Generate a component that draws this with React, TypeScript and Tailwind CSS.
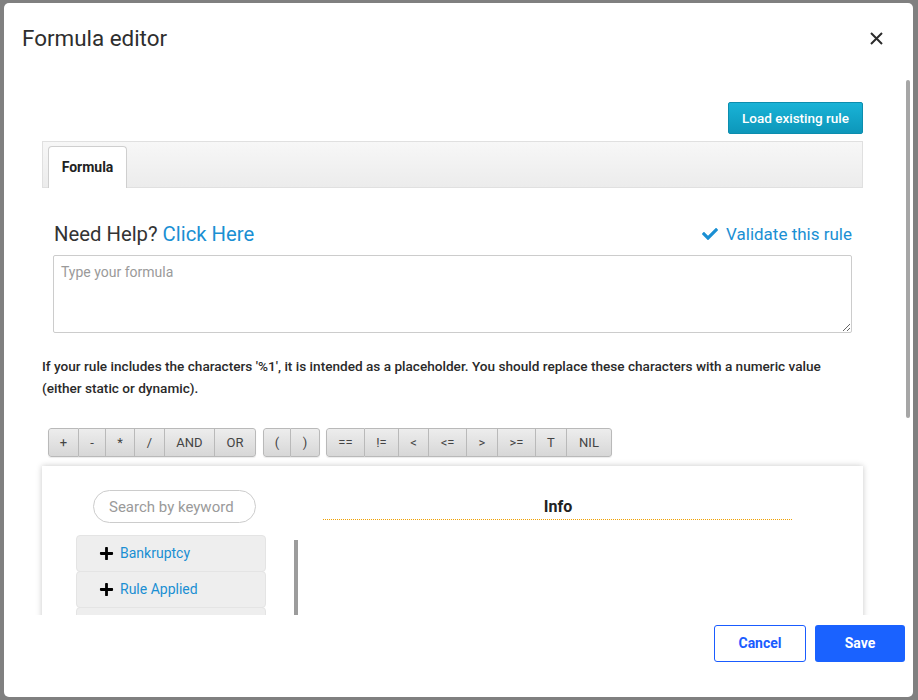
import React from "react";
import { FaCheck, FaPlus } from "react-icons/fa";

type Op = { label: string; w: number };

const groups: Op[][] = [
  [
    { label: "+", w: 31 },
    { label: "-", w: 27 },
    { label: "*", w: 29 },
    { label: "/", w: 30 },
    { label: "AND", w: 50 },
    { label: "OR", w: 41 },
  ],
  [
    { label: "(", w: 28 },
    { label: ")", w: 29 },
  ],
  [
    { label: "==", w: 39 },
    { label: "!=", w: 34 },
    { label: "<", w: 30 },
    { label: "<=", w: 38 },
    { label: ">", w: 31 },
    { label: ">=", w: 38 },
    { label: "T", w: 31 },
    { label: "NIL", w: 45 },
  ],
];

function OpGroup({ ops }: { ops: Op[] }) {
  return (
    <div className="flex h-[29px] rounded-[3px] overflow-hidden shadow-[0_1px_1px_rgba(0,0,0,0.08)]">
      {ops.map((o, i) => (
        <div
          key={i}
          style={{ width: o.w }}
          className="flex items-center justify-center bg-gradient-to-b from-[#ededed] to-[#d7d7d7] text-[13px] text-[#444] shrink-0 border-y border-r border-[#b9b9b9] first:border-l first:rounded-l-[3px] last:rounded-r-[3px]"
        >
          {o.label}
        </div>
      ))}
    </div>
  );
}

function ListItem({ label }: { label: string }) {
  return (
    <div className="h-[37px] w-[190px] -mt-px first:mt-0 bg-[#eeeeee] border border-[#e4e4e4] rounded-[4px] flex items-center pl-[22px]">
      <FaPlus size={15} className="text-black" />
      <span className="ml-[6px] text-[14px] text-[#1a8fd3]">{label}</span>
    </div>
  );
}

export default function App() {
  return (
    <div className="w-[918px] h-[700px] bg-[#808080] pt-[3px] pl-[4px] overflow-hidden font-['Roboto',sans-serif]">
      <div className="w-[909px] h-[694px] bg-white rounded-[5px] flex flex-col overflow-hidden">
        {/* Header */}
        <div className="h-[77px] shrink-0 flex justify-between">
          <h1 className="pl-[18px] pt-[22px] text-[22.4px] leading-[26px] text-[#2e2e2e] font-normal">
            Formula editor
          </h1>
          <div className="pt-[29px] pr-[30px]">
            <svg width="13" height="13" viewBox="0 0 13 13">
              <path d="M1 1 L12 12 M12 1 L1 12" stroke="#2b2b2b" strokeWidth="2" />
            </svg>
          </div>
        </div>

        {/* Body */}
        <div className="relative h-[535px] shrink-0 overflow-hidden pl-[38px]">
          <div className="absolute right-[3px] top-0 w-[4px] h-[338px] rounded-[2px] bg-[#a6a6a6]" />
          <div className="w-[821px] pt-[22px]">
            <div className="flex justify-end">
              <button className="w-[135px] h-[32px] rounded-[2px] bg-gradient-to-b from-[#19b3d7] to-[#0d97ba] border border-[#0c8dae] text-white text-[13.5px] font-medium">
                Load existing rule
              </button>
            </div>

            {/* Tab bar */}
            <div className="mt-[7px] h-[47px] bg-gradient-to-b from-[#f7f7f7] to-[#ececec] border border-[#e0e0e0] flex items-end pl-[5px]">
              <div className="w-[79px] h-[42px] bg-white border border-b-0 border-[#cfcfcf] rounded-t-[4px] flex items-center justify-center text-[14px] font-bold text-[#222] -mb-px">
                Formula
              </div>
            </div>

            {/* Help row */}
            <div className="px-[11px]">
              <div className="mt-[34px] flex items-center justify-between leading-[24px]">
                <div className="text-[20.3px] text-[#333] pl-px">
                  Need Help? <span className="text-[#1a8fd3]">Click Here</span>
                </div>
                <div className="flex items-center text-[17px] text-[#1a8fd3]">
                  <FaCheck size={16} className="mr-[8px]" />
                  Validate this rule
                </div>
              </div>
              <textarea
                placeholder="Type your formula"
                className="mt-[9px] block w-full h-[78px] border border-[#cccccc] rounded-[2px] px-[7px] py-[6px] text-[14px] text-[#333] placeholder:text-[#9a9a9a] outline-none"
              />
            </div>

            <p className="mt-[22px] text-[13.6px] leading-[22px] font-medium text-[#2a2a2a]">
              If your rule includes the characters '%1', it is intended as a placeholder. You should replace these characters with a numeric value (either static or dynamic).
            </p>

            {/* Operators */}
            <div className="mt-[29px] ml-[6px] flex">
              <OpGroup ops={groups[0]} />
              <div className="ml-[7px]">
                <OpGroup ops={groups[1]} />
              </div>
              <div className="ml-[6px]">
                <OpGroup ops={groups[2]} />
              </div>
            </div>

            {/* Card */}
            <div className="mt-[9px] h-[320px] bg-white shadow-[0_0_6px_rgba(0,0,0,0.22)] flex pl-[34px] pt-[24px]">
              <div className="w-[222px]">
                <div className="ml-[17px] w-[163px] h-[33px] rounded-full border border-[#cccccc] flex items-center pl-[15px] pt-px text-[15px] text-[#9a9a9a]">
                  Search by keyword
                </div>
                <div className="mt-[12px] flex">
                  <div className="flex flex-col">
                    <ListItem label="Bankruptcy" />
                    <ListItem label="Rule Applied" />
                    <ListItem label="" />
                  </div>
                  <div className="ml-[28px] mt-[5px] w-[4px] h-[200px] bg-[#9c9c9c]" />
                </div>
              </div>
              <div className="ml-[25px] w-[470px]">
                <div className="mt-[5px] text-center text-[16px] font-bold text-[#222] leading-[24px]">
                  Info
                </div>
                <div className="h-px w-full bg-[linear-gradient(to_right,#f0a000_50%,transparent_50%)] bg-[length:2px_1px] bg-repeat-x" />
              </div>
            </div>
          </div>
        </div>

        {/* Footer */}
        <div className="flex-1 flex justify-end items-start pt-[10px] pr-[8px] gap-[9px]">
          <button className="w-[92px] h-[37px] rounded-[3px] border border-[#1a5cff] bg-white text-[#1a5cff] text-[14px] font-bold">
            Cancel
          </button>
          <button className="w-[90px] h-[37px] rounded-[3px] bg-[#1a62ff] text-white text-[14px] font-bold">
            Save
          </button>
        </div>
      </div>
    </div>
  );
}
